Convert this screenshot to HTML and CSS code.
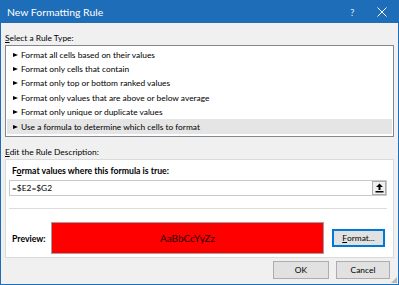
FILE: index.html
```html
<!DOCTYPE html>
<html lang="en">
<head>
  <meta charset="UTF-8">
  <title>New Formatting Rule</title>
  <link rel="stylesheet" href="styles.css">
</head>
<body>

  <div class="window">
    <div class="titlebar">
      <span class="title">New Formatting Rule</span>
      <span class="help">?</span>
      <span class="close">
        <svg width="10" height="10" viewBox="0 0 10 10"><path d="M0.5 0.5 L9.5 9.5 M9.5 0.5 L0.5 9.5" stroke="#fff" stroke-width="1"/></svg>
      </span>
    </div>

    <div class="content">
      <div class="label"><u>S</u>elect a Rule Type:</div>
      <ul class="rule-list">
        <li><i class="pointer"></i>Format all cells based on their values</li>
        <li><i class="pointer"></i>Format only cells that contain</li>
        <li><i class="pointer"></i>Format only top or bottom ranked values</li>
        <li><i class="pointer"></i>Format only values that are above or below average</li>
        <li><i class="pointer"></i>Format only unique or duplicate values</li>
        <li class="selected"><i class="pointer"></i>Use a formula to determine which cells to format</li>
      </ul>

      <div class="label"><u>E</u>dit the Rule Description:</div>
      <div class="desc">
        <div class="desc-title">F<u>o</u>rmat values where this formula is true:</div>
        <div class="formula">
          <span class="formula-text">=$E2=$G2</span>
          <span class="collapse-btn">
            <svg width="9" height="10" viewBox="0 0 9 10"><path d="M4.5 0.5 L8 4 L5.5 4 L5.5 7 L3.5 7 L3.5 4 L1 4 Z" fill="#000"/><rect x="0.5" y="8" width="8" height="1.5" fill="#000"/></svg>
          </span>
        </div>
        <div class="divider"></div>
        <div class="preview-row">
          <span class="preview-label">Preview:</span>
          <div class="preview">AaBbCcYyZz</div>
          <div class="btn btn-focus"><u>F</u>ormat...</div>
        </div>
      </div>

      <div class="actions">
        <div class="btn">OK</div>
        <div class="btn">Cancel</div>
      </div>
    </div>
    <div class="grip"></div>
  </div>

</body>
</html>
```

FILE: styles.css
```css
body {
  margin: 0;
  background-color: #f0f0f0;
  font-family: 'Segoe UI', Lato, sans-serif;
  font-size: 8.4px;
  color: #000;
}

.window {
  position: relative;
  width: 399px;
  height: 285px;
  box-sizing: border-box;
  border: 1px solid #1d6db8;
  border-top: none;
  background-color: #f0f0f0;
}

.titlebar {
  display: flex;
  align-items: center;
  height: 23px;
  margin: 0 -1px;
  padding: 0 0 0 7px;
  background-color: #1d6db8;
  color: #fff;
}

.title {
  flex: 1;
  font-size: 10.4px;
}

.help {
  width: 20px;
  font-size: 10px;
  color: #dfe9f5;
}

.close {
  display: flex;
  width: 24px;
  margin-right: 5px;
  justify-content: center;
}

.content {
  padding: 8px 4px 0;
}

.label {
  height: 14px;
  line-height: 14px;
}

.rule-list {
  list-style: none;
  margin: 0;
  height: 92px;
  box-sizing: border-box;
  padding: 1.5px 1px;
  border: 1px solid #828790;
  background-color: #fff;
}

.rule-list li {
  display: flex;
  align-items: center;
  height: 14.4px;
  padding-left: 6px;
}

.rule-list li.selected {
  background-color: #e5e5e5;
}

.pointer {
  display: inline-block;
  width: 0;
  height: 0;
  margin-right: 3px;
  border-top: 2px solid transparent;
  border-bottom: 2px solid transparent;
  border-left: 5px solid #000;
}

.content > .label:nth-of-type(2) {
  margin-top: 8px;
}

.desc {
  height: 99px;
  box-sizing: border-box;
  padding: 4px 6px 0 3px;
  border: 1px solid #dadada;
  background-color: #fff;
}

.desc-title {
  height: 14px;
  line-height: 14px;
  padding-left: 3px;
  font-weight: bold;
  font-size: 8.7px;
}

.formula {
  display: flex;
  align-items: center;
  justify-content: space-between;
  height: 16px;
  margin-top: 2px;
  box-sizing: border-box;
  padding: 0 0 0 2px;
  border: 1px solid #c8c8c8;
}

.collapse-btn {
  display: flex;
  align-items: center;
  justify-content: center;
  width: 14px;
  height: 14px;
  box-sizing: border-box;
  border: 1px solid #adadad;
  background-color: #f0f0f0;
}

.divider {
  height: 1px;
  margin-top: 12px;
  background-color: #dcdcdc;
}

.preview-row {
  display: flex;
  align-items: center;
  margin-top: 13px;
  padding-left: 3px;
}

.preview-label {
  width: 39px;
  font-weight: bold;
  font-size: 8.7px;
}

.preview {
  display: flex;
  align-items: center;
  justify-content: center;
  width: 273px;
  height: 32px;
  box-sizing: border-box;
  border: 1px solid #a0a0a0;
  background-color: #ff0000;
  color: #200000;
  font-size: 10px;
}

.btn {
  display: flex;
  align-items: center;
  justify-content: center;
  height: 18px;
  box-sizing: border-box;
  border: 1px solid #adadad;
  background-color: #e1e1e1;
}

.btn-focus {
  width: 53px;
  margin-left: 8px;
  border: 2px solid #0078d7;
}

.actions {
  display: flex;
  justify-content: flex-end;
  gap: 7px;
  margin-top: 3px;
  padding-right: 4px;
}

.actions .btn {
  width: 56px;
}

.actions .btn + .btn {
  width: 54px;
}

.grip {
  position: absolute;
  right: 1px;
  bottom: 1px;
  width: 6px;
  height: 6px;
  background-image: radial-gradient(circle, #b8b8b8 0.8px, transparent 1px);
  background-size: 2px 2px;
  clip-path: polygon(100% 0, 100% 100%, 0 100%);
}
```
